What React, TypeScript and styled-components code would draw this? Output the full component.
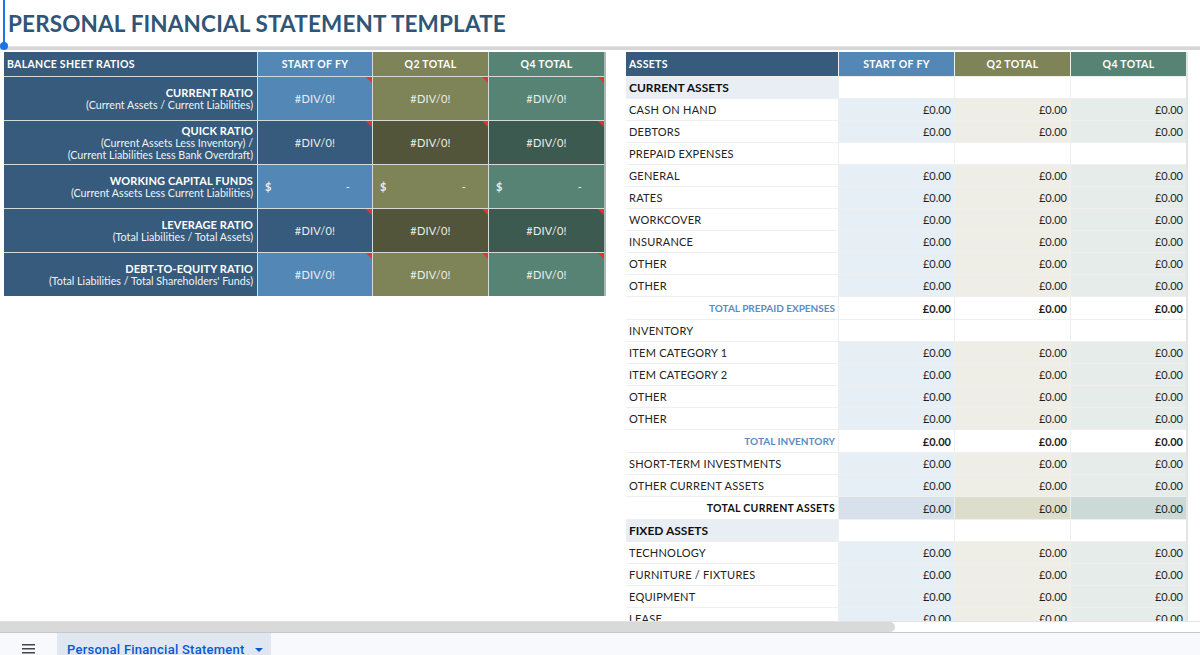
import React from 'react';
import styled, { createGlobalStyle, css } from 'styled-components';

const GlobalStyle = createGlobalStyle`
  html, body { margin: 0; padding: 0; background: #ffffff; overflow: hidden; }
  body { font-family: Lato, "DejaVu Sans", sans-serif; }
  #root { width: 1200px; height: 655px; }
`;

const Page = styled.div`
  width: 1200px;
  height: 655px;
  display: flex;
  flex-direction: column;
  overflow: hidden;
  position: relative;
  background: #fff;
`;

const Sheet = styled.div`
  height: 621px;
  flex: none;
  overflow: hidden;
  display: flex;
  flex-direction: column;
  position: relative;
`;

const TitleRow = styled.div`
  height: 46px;
  flex: none;
  display: flex;
  align-items: center;
  padding-left: 8px;
  box-sizing: border-box;
`;

const Title = styled.h1`
  margin: 0;
  padding-top: 1px;
  font-family: Lato, "DejaVu Sans", sans-serif;
  font-weight: 700;
  font-size: 22.5px;
  letter-spacing: 0.15px;
  color: #2f5577;
`;

const FrozenLine = styled.div`
  height: 3px;
  flex: none;
  background: #d6d6d6;
  border-top: 1px solid #e4e4e4;
`;

const Cursor = styled.div`
  position: absolute;
  left: 3px;
  top: 0;
  width: 2px;
  height: 47px;
  background: #1a73e8;
  &::after {
    content: '';
    position: absolute;
    left: -3px;
    bottom: -3px;
    width: 8px;
    height: 8px;
    border-radius: 50%;
    background: #1a73e8;
  }
`;

const Body = styled.div`
  display: flex;
  align-items: flex-start;
  gap: 20px;
  padding: 2px 0 0 4px;
`;

/* ---------- left: balance sheet ratios ---------- */

const RatioGrid = styled.div`
  display: grid;
  grid-template-columns: 253px 114px 115px 115px;
  grid-template-rows: 24px repeat(5, 43px);
  gap: 1px;
  background: #d3dad7;
  border-right: 2px solid #aeb6b2;
  flex: none;
`;

const HeadCell = styled.div<{ $bg: string; $left?: boolean }>`
  background: ${(p) => p.$bg};
  color: #ffffff;
  font-weight: 700;
  font-size: 10.5px;
  letter-spacing: 0.3px;
  display: flex;
  align-items: center;
  justify-content: ${(p) => (p.$left ? 'flex-start' : 'center')};
  padding-left: ${(p) => (p.$left ? '3px' : '0')};
  white-space: nowrap;
`;

const RatioLabel = styled.div`
  background: #365b7c;
  display: flex;
  flex-direction: column;
  align-items: flex-end;
  justify-content: center;
  padding-right: 4px;
  text-align: right;
  line-height: 12px;
  color: #f0f3f6;
`;

const RatioName = styled.span`
  font-weight: 700;
  font-size: 11px;
  letter-spacing: 0.1px;
  color: #ffffff;
`;

const RatioFormula = styled.span`
  font-size: 10.7px;
  white-space: nowrap;
`;

const ValueCell = styled.div<{ $bg: string; $note?: boolean; $money?: boolean }>`
  position: relative;
  background: ${(p) => p.$bg};
  color: #eceeee;
  font-size: 11px;
  letter-spacing: 0.2px;
  display: flex;
  align-items: center;
  justify-content: ${(p) => (p.$money ? 'space-between' : 'center')};
  padding: ${(p) => (p.$money ? '0 22px 0 7px' : '0')};
  ${(p) =>
    p.$note &&
    css`
      &::after {
        content: '';
        position: absolute;
        top: 0;
        right: 0;
        border-style: solid;
        border-width: 0 6px 6px 0;
        border-color: transparent #e8322f transparent transparent;
      }
    `}
`;

const Dollar = styled.span`
  font-weight: 700;
`;

const light = { start: '#5388b6', q2: '#7e8358', q4: '#568374' };
const dark = { start: '#365b7c', q2: '#525539', q4: '#3c5a4f' };

type Ratio = { name: string; formula: string[]; money?: boolean; dark?: boolean };

const ratios: Ratio[] = [
  { name: 'CURRENT RATIO', formula: ['(Current Assets / Current Liabilities)'] },
  {
    name: 'QUICK RATIO',
    formula: ['(Current Assets Less Inventory) /', '(Current Liabilities Less Bank Overdraft)'],
    dark: true,
  },
  { name: 'WORKING CAPITAL FUNDS', formula: ['(Current Assets Less Current Liabilities)'], money: true },
  { name: 'LEVERAGE RATIO', formula: ['(Total Liabilities / Total Assets)'], dark: true },
  { name: 'DEBT-TO-EQUITY RATIO', formula: ["(Total Liabilities / Total Shareholders' Funds)"] },
];

const RatioTable = () => (
  <RatioGrid>
    <HeadCell $bg="#365b7c" $left>BALANCE SHEET RATIOS</HeadCell>
    <HeadCell $bg={light.start}>START OF FY</HeadCell>
    <HeadCell $bg={light.q2}>Q2 TOTAL</HeadCell>
    <HeadCell $bg={light.q4}>Q4 TOTAL</HeadCell>
    {ratios.map((r) => {
      const pal = r.dark ? dark : light;
      return (
        <React.Fragment key={r.name}>
          <RatioLabel>
            <RatioName>{r.name}</RatioName>
            {r.formula.map((f) => (
              <RatioFormula key={f}>{f}</RatioFormula>
            ))}
          </RatioLabel>
          {(['start', 'q2', 'q4'] as const).map((k) =>
            r.money ? (
              <ValueCell key={k} $bg={pal[k]} $money>
                <Dollar>$</Dollar>
                <span>-</span>
              </ValueCell>
            ) : (
              <ValueCell key={k} $bg={pal[k]} $note>
                #DIV/0!
              </ValueCell>
            )
          )}
        </React.Fragment>
      );
    })}
  </RatioGrid>
);

/* ---------- right: assets ---------- */

type Kind = 'section' | 'item' | 'sub' | 'total' | 'grand';

const AssetTable = styled.div`
  display: flex;
  flex-direction: column;
  gap: 1px;
  background: #efefef;
  border-right: 2px solid #e4e4e4;
  flex: none;
`;

const AssetRow = styled.div<{ $h: number }>`
  display: grid;
  grid-template-columns: 212px 115px 115px 115px;
  column-gap: 1px;
  height: ${(p) => p.$h}px;
`;

const AssetLabel = styled.div<{ $kind: Kind }>`
  display: flex;
  align-items: center;
  white-space: nowrap;
  background: #ffffff;
  color: #232323;
  font-size: 11px;
  letter-spacing: 0.25px;
  padding: 0 3px;
  ${(p) =>
    p.$kind === 'section' &&
    css`
      background: #e8eef4;
      font-weight: 700;
      font-size: 12px;
      letter-spacing: 0;
      color: #111;
    `}
  ${(p) =>
    p.$kind === 'total' &&
    css`
      justify-content: flex-end;
      font-weight: 700;
      font-size: 10px;
      letter-spacing: 0;
      color: #5a8cc0;
    `}
  ${(p) =>
    p.$kind === 'grand' &&
    css`
      justify-content: flex-end;
      font-weight: 700;
      font-size: 10.5px;
      letter-spacing: 0.3px;
      color: #111;
    `}
`;

const fills: Record<'item' | 'grand', string[]> = {
  item: ['#e6eef6', '#eeeee6', '#e5ecea'],
  grand: ['#d6e1ec', '#dcdecb', '#cbdad6'],
};

const Amount = styled.div<{ $bg: string; $bold?: boolean }>`
  background: ${(p) => p.$bg};
  display: flex;
  align-items: center;
  justify-content: flex-end;
  padding-right: 3px;
  font-size: 11px;
  color: #1e1e1e;
  font-weight: ${(p) => (p.$bold ? 700 : 400)};
`;

const assetRows: { label: string; kind: Kind }[] = [
  { label: 'CURRENT ASSETS', kind: 'section' },
  { label: 'CASH ON HAND', kind: 'item' },
  { label: 'DEBTORS', kind: 'item' },
  { label: 'PREPAID EXPENSES', kind: 'sub' },
  { label: 'GENERAL', kind: 'item' },
  { label: 'RATES', kind: 'item' },
  { label: 'WORKCOVER', kind: 'item' },
  { label: 'INSURANCE', kind: 'item' },
  { label: 'OTHER', kind: 'item' },
  { label: 'OTHER', kind: 'item' },
  { label: 'TOTAL PREPAID EXPENSES', kind: 'total' },
  { label: 'INVENTORY', kind: 'sub' },
  { label: 'ITEM CATEGORY 1', kind: 'item' },
  { label: 'ITEM CATEGORY 2', kind: 'item' },
  { label: 'OTHER', kind: 'item' },
  { label: 'OTHER', kind: 'item' },
  { label: 'TOTAL INVENTORY', kind: 'total' },
  { label: 'SHORT-TERM INVESTMENTS', kind: 'item' },
  { label: 'OTHER CURRENT ASSETS', kind: 'item' },
  { label: 'TOTAL CURRENT ASSETS', kind: 'grand' },
  { label: 'FIXED ASSETS', kind: 'section' },
  { label: 'TECHNOLOGY', kind: 'item' },
  { label: 'FURNITURE / FIXTURES', kind: 'item' },
  { label: 'EQUIPMENT', kind: 'item' },
  { label: 'LEASE', kind: 'item' },
];

const Assets = () => (
  <AssetTable>
    <AssetRow $h={24}>
      <HeadCell $bg="#365b7c" $left>ASSETS</HeadCell>
      <HeadCell $bg={light.start}>START OF FY</HeadCell>
      <HeadCell $bg={light.q2}>Q2 TOTAL</HeadCell>
      <HeadCell $bg={light.q4}>Q4 TOTAL</HeadCell>
    </AssetRow>
    {assetRows.map((r, i) => {
      const h = r.kind === 'total' || r.kind === 'grand' ? 22 : 21;
      return (
        <AssetRow key={i} $h={h}>
          <AssetLabel $kind={r.kind}>{r.label}</AssetLabel>
          {[0, 1, 2].map((c) => {
            if (r.kind === 'section' || r.kind === 'sub') return <Amount key={c} $bg="#ffffff" />;
            if (r.kind === 'total')
              return (
                <Amount key={c} $bg="#ffffff" $bold>
                  £0.00
                </Amount>
              );
            return (
              <Amount key={c} $bg={fills[r.kind][c]}>
                £0.00
              </Amount>
            );
          })}
        </AssetRow>
      );
    })}
  </AssetTable>
);

/* ---------- bottom chrome ---------- */

const ScrollTrack = styled.div`
  height: 12px;
  flex: none;
  box-sizing: border-box;
  border-top: 1px solid #e3e3e3;
  border-bottom: 1px solid #c8c8c8;
  background: #ffffff;
  display: flex;
`;

const ScrollThumb = styled.div`
  width: 895px;
  background: #d9d9d9;
  border-radius: 0 6px 6px 0;
`;

const TabBar = styled.div`
  height: 40px;
  flex: none;
  background: #f8f9fc;
  display: flex;
  align-items: stretch;
`;

const MenuButton = styled.div`
  width: 57px;
  display: flex;
  justify-content: center;
  padding-top: 11px;
  box-sizing: border-box;
`;

const Tab = styled.div`
  width: 214px;
  box-sizing: border-box;
  background: #e1e7f0;
  display: flex;
  align-items: flex-start;
  gap: 10px;
  padding: 9px 0 0 10px;
  font-family: Roboto, "Liberation Sans", sans-serif;
  font-weight: 500;
  font-size: 13px;
  line-height: 16px;
  letter-spacing: 0.25px;
  color: #0b57d0;
  white-space: nowrap;
`;

const Caret = styled.span`
  margin-top: 6px;
  width: 0;
  height: 0;
  border-left: 4px solid transparent;
  border-right: 4px solid transparent;
  border-top: 4px solid #0b57d0;
`;

export default function App() {
  return (
    <Page>
      <GlobalStyle />
      <Sheet>
        <TitleRow>
          <Title>PERSONAL FINANCIAL STATEMENT TEMPLATE</Title>
        </TitleRow>
        <FrozenLine />
        <Body>
          <RatioTable />
          <Assets />
        </Body>
        <Cursor />
      </Sheet>
      <ScrollTrack>
        <ScrollThumb />
      </ScrollTrack>
      <TabBar>
        <MenuButton>
          <svg width="13" height="10" viewBox="0 0 13 10">
            <rect x="0" y="0" width="13" height="1.5" fill="#444" />
            <rect x="0" y="4" width="13" height="1.5" fill="#444" />
            <rect x="0" y="8" width="13" height="1.5" fill="#444" />
          </svg>
        </MenuButton>
        <Tab>
          <span>Personal Financial Statement</span>
          <Caret />
        </Tab>
      </TabBar>
    </Page>
  );
}
